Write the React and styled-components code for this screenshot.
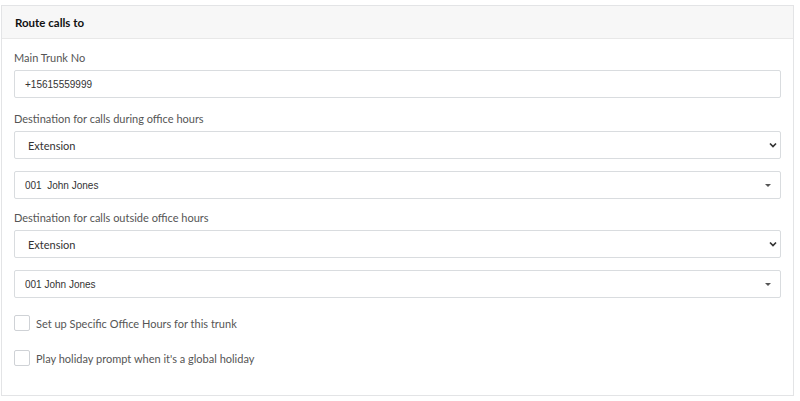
import React from 'react'
import styled, { createGlobalStyle } from 'styled-components'

const GlobalStyle = createGlobalStyle`
  html, body {
    margin: 0;
    padding: 0;
    background: #fff;
  }
  body {
    font-family: Lato, "Open Sans", sans-serif;
  }
`

const Page = styled.div`
  padding: 5px 6px 0 1px;
`

const Card = styled.div`
  border: 1px solid #e3e4e6;
  background: #fff;
`

const CardHeader = styled.div`
  height: 32px;
  display: flex;
  align-items: center;
  padding: 0 13px;
  background: #f7f7f7;
  border-bottom: 1px solid #e8e8e8;
  font-family: Lato, sans-serif;
  font-weight: 700;
  font-size: 11.5px;
  color: #111;
`

const CardBody = styled.div`
  padding: 11px 12px 29px 12px;
  display: flex;
  flex-direction: column;
`

const Label = styled.div`
  font-family: Lato, sans-serif;
  font-size: 11px;
  color: #555;
  line-height: 16px;
  margin-bottom: 4px;
`

const Field = styled.div`
  height: 28px;
  box-sizing: border-box;
  border: 1px solid #d9dcdf;
  border-radius: 2px;
  display: flex;
  align-items: center;
  justify-content: space-between;
  padding: 0 ${p => (p.$native ? 2 : 8)}px 0 ${p => (p.$native ? 13 : 10)}px;
  margin-bottom: ${p => p.$gap}px;
  background: #fff;
`

const FieldText = styled.span`
  font-family: ${p => (p.$sans ? 'Lato, sans-serif' : '"Liberation Sans", Arial, sans-serif')};
  font-size: ${p => (p.$sans ? '11px' : '10px')};
  color: #333;
  white-space: pre;
`

const Caret = styled.span`
  width: 0;
  height: 0;
  border-left: 3px solid transparent;
  border-right: 3px solid transparent;
  border-top: 3px solid #555;
  margin-right: 1px;
`

const CheckRow = styled.label`
  display: flex;
  align-items: center;
  gap: 6px;
  height: 16px;
  margin-bottom: ${p => p.$gap}px;
`

const Box = styled.span`
  width: 16px;
  height: 16px;
  box-sizing: border-box;
  border: 1px solid #cfd2d6;
  border-radius: 2px;
  background: #fff;
`

const CheckText = styled.span`
  font-family: Lato, sans-serif;
  font-size: 11px;
  color: #555;
`

const Chevron = () => (
  <svg width="10" height="8" viewBox="0 0 10 8">
    <path d="M2 2.5 L5 5.5 L8 2.5" fill="none" stroke="#333" strokeWidth="1.7" />
  </svg>
)

export default function App() {
  return (
    <>
      <GlobalStyle />
      <Page>
        <Card>
          <CardHeader>Route calls to</CardHeader>
          <CardBody>
            <Label>Main Trunk No</Label>
            <Field $gap={13}>
              <FieldText>+15615559999</FieldText>
            </Field>
            <Label>Destination for calls during office hours</Label>
            <Field $native $gap={12}>
              <FieldText $sans>Extension</FieldText>
              <Chevron />
            </Field>
            <Field $gap={11}>
              <FieldText>001  John Jones</FieldText>
              <Caret />
            </Field>
            <Label>Destination for calls outside office hours</Label>
            <Field $native $gap={12}>
              <FieldText $sans>Extension</FieldText>
              <Chevron />
            </Field>
            <Field $gap={17}>
              <FieldText>001 John Jones</FieldText>
              <Caret />
            </Field>
            <CheckRow $gap={19}>
              <Box />
              <CheckText>Set up Specific Office Hours for this trunk</CheckText>
            </CheckRow>
            <CheckRow $gap={0}>
              <Box />
              <CheckText>Play holiday prompt when it's a global holiday</CheckText>
            </CheckRow>
          </CardBody>
        </Card>
      </Page>
    </>
  )
}
